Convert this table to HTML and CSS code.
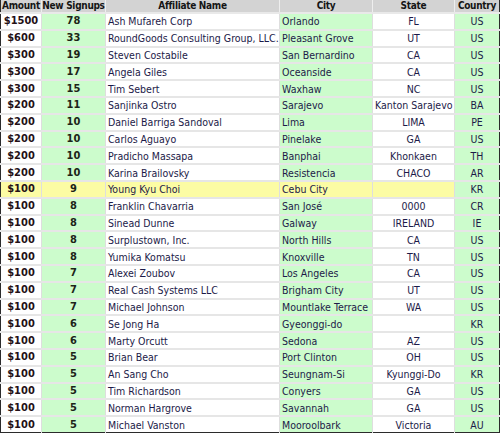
FILE: index.html
```html
<!DOCTYPE html>
<html>
<head>
<meta charset="utf-8">
<link rel="stylesheet" href="styles.css">
</head>
<body>
<table class="grid">
  <colgroup>
    <col class="c-amt"><col class="c-num"><col class="c-name"><col class="c-city"><col class="c-state"><col class="c-cty">
  </colgroup>
  <thead>
    <tr><th>Amount</th><th>New Signups</th><th>Affiliate Name</th><th>City</th><th>State</th><th>Country</th></tr>
  </thead>
  <tbody>
    <tr><td class="amt">$1500</td><td class="num">78</td><td class="name">Ash Mufareh Corp</td><td class="city">Orlando</td><td class="state">FL</td><td class="cty">US</td></tr>
    <tr><td class="amt">$600</td><td class="num">33</td><td class="name">RoundGoods Consulting Group, LLC.</td><td class="city">Pleasant Grove</td><td class="state">UT</td><td class="cty">US</td></tr>
    <tr><td class="amt">$300</td><td class="num">19</td><td class="name">Steven Costabile</td><td class="city">San Bernardino</td><td class="state">CA</td><td class="cty">US</td></tr>
    <tr><td class="amt">$300</td><td class="num">17</td><td class="name">Angela Giles</td><td class="city">Oceanside</td><td class="state">CA</td><td class="cty">US</td></tr>
    <tr><td class="amt">$300</td><td class="num">15</td><td class="name">Tim Sebert</td><td class="city">Waxhaw</td><td class="state">NC</td><td class="cty">US</td></tr>
    <tr><td class="amt">$200</td><td class="num">11</td><td class="name">Sanjinka Ostro</td><td class="city">Sarajevo</td><td class="state">Kanton Sarajevo</td><td class="cty">BA</td></tr>
    <tr><td class="amt">$200</td><td class="num">10</td><td class="name">Daniel Barriga Sandoval</td><td class="city">Lima</td><td class="state">LIMA</td><td class="cty">PE</td></tr>
    <tr><td class="amt">$200</td><td class="num">10</td><td class="name">Carlos Aguayo</td><td class="city">Pinelake</td><td class="state">GA</td><td class="cty">US</td></tr>
    <tr><td class="amt">$200</td><td class="num">10</td><td class="name">Pradicho Massapa</td><td class="city">Banphai</td><td class="state">Khonkaen</td><td class="cty">TH</td></tr>
    <tr><td class="amt">$200</td><td class="num">10</td><td class="name">Karina Brailovsky</td><td class="city">Resistencia</td><td class="state">CHACO</td><td class="cty">AR</td></tr>
    <tr class="hl"><td class="amt">$100</td><td class="num">9</td><td class="name">Young Kyu Choi</td><td class="city">Cebu City</td><td class="state"></td><td class="cty">KR</td></tr>
    <tr><td class="amt">$100</td><td class="num">8</td><td class="name">Franklin Chavarria</td><td class="city">San José</td><td class="state">0000</td><td class="cty">CR</td></tr>
    <tr><td class="amt">$100</td><td class="num">8</td><td class="name">Sinead Dunne</td><td class="city">Galway</td><td class="state">IRELAND</td><td class="cty">IE</td></tr>
    <tr><td class="amt">$100</td><td class="num">8</td><td class="name">Surplustown, Inc.</td><td class="city">North Hills</td><td class="state">CA</td><td class="cty">US</td></tr>
    <tr><td class="amt">$100</td><td class="num">8</td><td class="name">Yumika Komatsu</td><td class="city">Knoxville</td><td class="state">TN</td><td class="cty">US</td></tr>
    <tr><td class="amt">$100</td><td class="num">7</td><td class="name">Alexei Zoubov</td><td class="city">Los Angeles</td><td class="state">CA</td><td class="cty">US</td></tr>
    <tr><td class="amt">$100</td><td class="num">7</td><td class="name">Real Cash Systems LLC</td><td class="city">Brigham City</td><td class="state">UT</td><td class="cty">US</td></tr>
    <tr><td class="amt">$100</td><td class="num">7</td><td class="name">Michael Johnson</td><td class="city">Mountlake Terrace</td><td class="state">WA</td><td class="cty">US</td></tr>
    <tr><td class="amt">$100</td><td class="num">6</td><td class="name">Se Jong Ha</td><td class="city">Gyeonggi-do</td><td class="state"></td><td class="cty">KR</td></tr>
    <tr><td class="amt">$100</td><td class="num">6</td><td class="name">Marty Orcutt</td><td class="city">Sedona</td><td class="state">AZ</td><td class="cty">US</td></tr>
    <tr><td class="amt">$100</td><td class="num">5</td><td class="name">Brian Bear</td><td class="city">Port Clinton</td><td class="state">OH</td><td class="cty">US</td></tr>
    <tr><td class="amt">$100</td><td class="num">5</td><td class="name">An Sang Cho</td><td class="city">Seungnam-Si</td><td class="state">Kyunggi-Do</td><td class="cty">KR</td></tr>
    <tr><td class="amt">$100</td><td class="num">5</td><td class="name">Tim Richardson</td><td class="city">Conyers</td><td class="state">GA</td><td class="cty">US</td></tr>
    <tr><td class="amt">$100</td><td class="num">5</td><td class="name">Norman Hargrove</td><td class="city">Savannah</td><td class="state">GA</td><td class="cty">US</td></tr>
    <tr><td class="amt">$100</td><td class="num">5</td><td class="name">Michael Vanston</td><td class="city">Mooroolbark</td><td class="state">Victoria</td><td class="cty">AU</td></tr>
  </tbody>
</table>
</body>
</html>
```

FILE: styles.css
```css
html, body {
  margin: 0;
  padding: 0;
  background: #ffffff;
}

.grid {
  width: 500px;
  table-layout: fixed;
  border-collapse: collapse;
  border: 1px solid #2b2b2b;
  border-top: none;
  font-family: "DejaVu Sans Condensed", "DejaVu Sans", sans-serif;
  font-size: 10.5px;
  color: #1c1a48;
}

.c-amt { width: 41px; }
.c-num { width: 64px; }
.c-name { width: 174px; }
.c-city { width: 93px; }
.c-state { width: 82px; }
.c-cty { width: 45px; }

.grid th {
  height: 12px;
  padding: 0;
  background: #d3d3d3;
  color: #151515;
  font-weight: bold;
  font-size: 10px;
  letter-spacing: -0.3px;
  text-align: center;
  line-height: 12px;
  border-top: none;
  border-bottom: 2px solid #e9e9e9;
  border-left: 1px solid #eeeeee;
  border-right: 1px solid #eeeeee;
  white-space: nowrap;
  overflow: hidden;
}

.grid td {
  height: 14.8px;
  padding: 0 2px;
  line-height: 14px;
  background: #ffffff;
  border-bottom: 2px solid #e6e6e6;
  border-left: 1px solid #dedede;
  border-right: 1px solid #dedede;
  white-space: nowrap;
  overflow: hidden;
}

.grid th:first-child,
.grid td:first-child { border-left: none; }
.grid th:last-child,
.grid td:last-child { border-right: none; }
.grid tbody tr:last-child td { border-bottom: none; }

.grid td.amt {
  text-align: center;
  font-weight: bold;
  font-size: 11px;
  color: #241016;
}

.grid td.num {
  text-align: center;
  font-weight: bold;
  font-size: 11px;
  color: #1c2418;
  background: #ccfccc;
}

.grid td.name { text-align: left; }

.grid td.city {
  text-align: left;
  background: #ccfccc;
}

.grid td.state { text-align: center; }

.grid td.cty {
  text-align: center;
  background: #ccfccc;
}

.grid tr.hl td.amt,
.grid tr.hl td.num,
.grid tr.hl td.name,
.grid tr.hl td.city,
.grid tr.hl td.state {
  background: #fcfca4;
}
```
